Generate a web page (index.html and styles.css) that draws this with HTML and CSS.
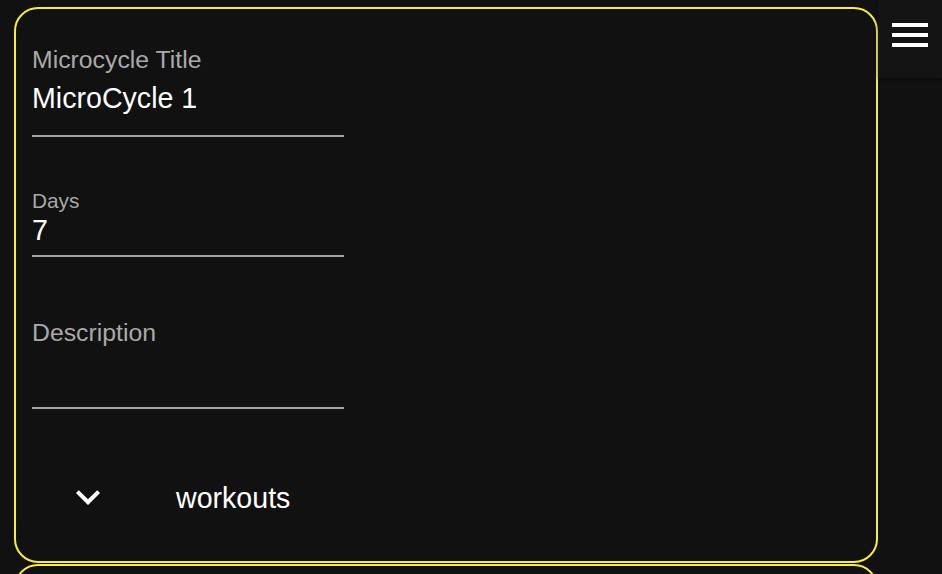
FILE: index.html
```html
<!DOCTYPE html>
<html>
<head>
<meta charset="utf-8">
<link rel="stylesheet" href="styles.css">
</head>
<body>
<div class="page">
  <div class="list">
    <div class="card">
      <div class="field field-title">
        <div class="label">Microcycle Title</div>
        <div class="value">MicroCycle 1</div>
      </div>
      <div class="field field-days">
        <div class="label label-small">Days</div>
        <div class="value">7</div>
      </div>
      <div class="field field-desc">
        <div class="label">Description</div>
        <div class="value value-empty"></div>
      </div>
      <div class="workouts">
        <svg class="chevron" viewBox="0 0 24 24" width="48" height="48"><path fill="#fff" d="M16.59 8.59L12 13.17 7.41 8.59 6 10l6 6 6-6z"/></svg>
        <span class="workouts-text">workouts</span>
      </div>
    </div>
    <div class="card card-next"></div>
  </div>
  <div class="menu">
    <span class="bar"></span>
    <span class="bar"></span>
    <span class="bar"></span>
  </div>
</div>
</body>
</html>
```
FILE: styles.css
```css
html, body {
  margin: 0;
  padding: 0;
  background: #111111;
  height: 100%;
  overflow: hidden;
}
body {
  font-family: "Liberation Sans", Arial, Helvetica, sans-serif;
  color: #ffffff;
}
.page {
  position: relative;
  height: 574px;
  overflow: hidden;
}
.list {
  display: flex;
  flex-direction: column;
  gap: 1px;
  padding: 7px 0 0 14px;
}
.card {
  box-sizing: border-box;
  width: 864px;
  height: 556px;
  border: 2px solid #f8ec43;
  border-radius: 24px;
  padding: 37px 16px 0 16px;
  flex-shrink: 0;
}
.card-next {
  height: 200px;
}
.field {
  width: 312px;
  border-bottom: 2px solid #a6a6a6;
}
.label {
  font-size: 24.8px;
  line-height: 28px;
  color: #a9a9a9;
}
.label-small {
  font-size: 20.8px;
  line-height: 24px;
}
.value {
  font-size: 28.6px;
  line-height: 32px;
  color: #ffffff;
}
.field-title .value {
  margin-top: 8px;
  padding-bottom: 21px;
}
.field-days {
  margin-top: 52px;
}
.field-days .value {
  margin-top: 1px;
  padding-bottom: 9px;
}
.field-desc {
  margin-top: 62px;
}
.value-empty {
  height: 60px;
}
.workouts {
  display: flex;
  align-items: center;
  margin-top: 64px;
  padding-left: 32px;
  height: 48px;
}
.chevron {
  display: block;
  flex-shrink: 0;
}
.workouts-text {
  font-size: 28.6px;
  line-height: 32px;
  margin-left: 64px;
  position: relative;
  top: 1px;
}
.menu {
  position: absolute;
  top: 0;
  right: 0;
  width: 64px;
  height: 78px;
  background: #141414;
  box-shadow: 0 1px 3px rgba(0, 0, 0, 0.5);
  display: flex;
  flex-direction: column;
  justify-content: center;
  align-items: center;
  gap: 6px;
  box-sizing: border-box;
  padding-bottom: 8px;
}
.bar {
  display: block;
  width: 36px;
  height: 4px;
  background: #ffffff;
}
```
